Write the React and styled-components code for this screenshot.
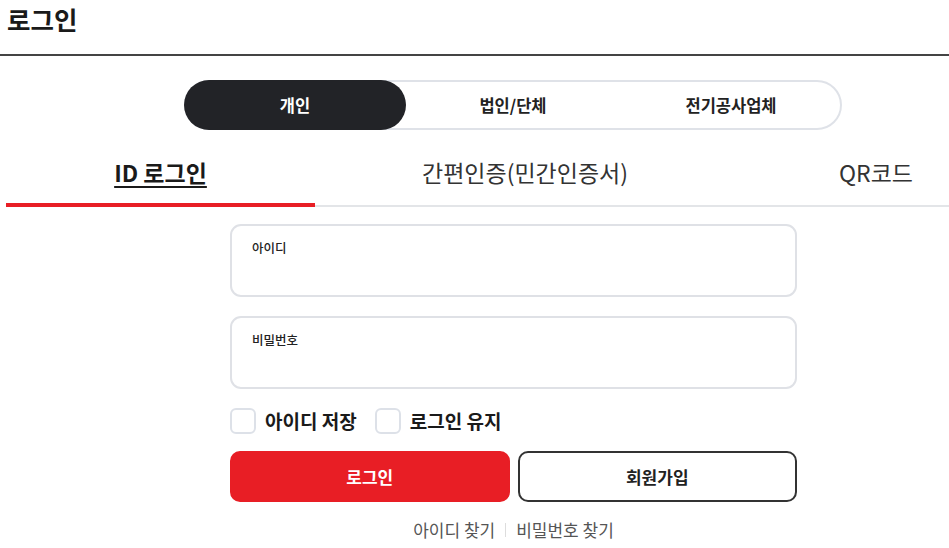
import styled, { createGlobalStyle } from 'styled-components'

const GlobalStyle = createGlobalStyle`
  body {
    margin: 0;
    background: #fff;
    font-family: 'Noto Sans CJK KR', 'Noto Sans', sans-serif;
    color: #222;
  }
`

const Page = styled.div`
  width: 949px;
`

const Header = styled.header`
  height: 54px;
  border-bottom: 2px solid #444;
  padding-left: 7px;
  display: flex;
  align-items: flex-start;
`

const Title = styled.h1`
  margin: 1px 0 0;
  font-size: 25.5px;
  font-weight: 700;
  line-height: 36px;
  color: #1a1a1a;
`

const SegmentWrap = styled.div`
  display: flex;
  justify-content: flex-start;
  padding: 24px 0 0 184px;
`

const Segment = styled.div`
  display: flex;
  width: 658px;
  height: 50px;
  border: 2px solid #dfe2e8;
  border-radius: 25px;
  box-sizing: border-box;
`

const SegButton = styled.button`
  flex: 1;
  margin: -2px;
  border: none;
  border-radius: 25px;
  background: ${(p) => (p.$active ? '#222327' : 'transparent')};
  color: ${(p) => (p.$active ? '#fff' : '#222')};
  font-family: inherit;
  font-size: 16.5px;
  font-weight: 700;
  cursor: pointer;
`

const Tabs = styled.div`
  display: flex;
  margin: 20px 0 0 6px;
  height: 55px;
  border-bottom: 2px solid #e3e5e8;
`

const Tab = styled.div`
  width: ${(p) => p.$w}px;
  padding-left: ${(p) => p.$pl || 0}px;
  box-sizing: border-box;
  display: flex;
  align-items: center;
  justify-content: center;
  padding-bottom: 10px;
  margin-bottom: -2px;
  font-size: 23px;
  font-weight: ${(p) => (p.$active ? 700 : 400)};
  text-decoration: ${(p) => (p.$active ? 'underline' : 'none')};
  text-decoration-thickness: 2px;
  text-underline-offset: 4px;
  border-bottom: 4px solid ${(p) => (p.$active ? '#e81e25' : 'transparent')};
  color: ${(p) => (p.$active ? '#1a1a1a' : '#333')};
`

const Form = styled.form`
  width: 567px;
  margin: 17px 0 0 230px;
  display: flex;
  flex-direction: column;
`

const Field = styled.label`
  height: 73px;
  box-sizing: border-box;
  border: 2px solid #dfe1e6;
  border-radius: 11px;
  padding: 12px 20px;
  margin-bottom: 19px;
  display: flex;
  flex-direction: column;
`

const FieldLabel = styled.span`
  font-size: 12.5px;
  font-weight: 500;
  color: #222;
`

const FieldInput = styled.input`
  border: none;
  outline: none;
  font-family: inherit;
  font-size: 15px;
  padding: 4px 0 0;
  background: transparent;
`

const Options = styled.div`
  display: flex;
  align-items: center;
  gap: 18px;
  margin-top: -1px;
`

const Check = styled.label`
  display: flex;
  align-items: center;
  gap: 9px;
  font-size: 19px;
  font-weight: 700;
  color: #1a1a1a;
`

const Box = styled.span`
  width: 26px;
  height: 26px;
  box-sizing: border-box;
  border: 2px solid #dde1e8;
  border-radius: 6px;
  background: #fff;
`

const Buttons = styled.div`
  display: grid;
  grid-template-columns: 1fr 1fr;
  gap: 8px;
  margin-top: 17px;
`

const Btn = styled.button`
  height: 51px;
  border-radius: 10px;
  box-sizing: border-box;
  font-family: inherit;
  font-size: 17px;
  font-weight: 700;
  cursor: pointer;
  border: 2px solid ${(p) => (p.$primary ? '#e81e25' : '#333')};
  background: ${(p) => (p.$primary ? '#e81e25' : '#fff')};
  color: ${(p) => (p.$primary ? '#fff' : '#222')};
`

const Links = styled.div`
  display: flex;
  justify-content: center;
  align-items: center;
  gap: 10px;
  margin-top: 15px;
  font-size: 17px;
  color: #555;
`

const Sep = styled.span`
  width: 1px;
  height: 14px;
  background: #ddd;
`

export default function App() {
  return (
    <Page>
      <GlobalStyle />
      <Header>
        <Title>로그인</Title>
      </Header>
      <SegmentWrap>
        <Segment>
          <SegButton $active>개인</SegButton>
          <SegButton>법인/단체</SegButton>
          <SegButton>전기공사업체</SegButton>
        </Segment>
      </SegmentWrap>
      <Tabs>
        <Tab $w={309} $active>ID 로그인</Tab>
        <Tab $w={420}>간편인증(민간인증서)</Tab>
        <Tab $w={214} $pl={68}>QR코드</Tab>
      </Tabs>
      <Form>
        <Field>
          <FieldLabel>아이디</FieldLabel>
          <FieldInput type="text" />
        </Field>
        <Field>
          <FieldLabel>비밀번호</FieldLabel>
          <FieldInput type="password" />
        </Field>
        <Options>
          <Check>
            <Box />
            아이디 저장
          </Check>
          <Check>
            <Box />
            로그인 유지
          </Check>
        </Options>
        <Buttons>
          <Btn type="button" $primary>로그인</Btn>
          <Btn type="button">회원가입</Btn>
        </Buttons>
        <Links>
          <span>아이디 찾기</span>
          <Sep />
          <span>비밀번호 찾기</span>
        </Links>
      </Form>
    </Page>
  )
}
